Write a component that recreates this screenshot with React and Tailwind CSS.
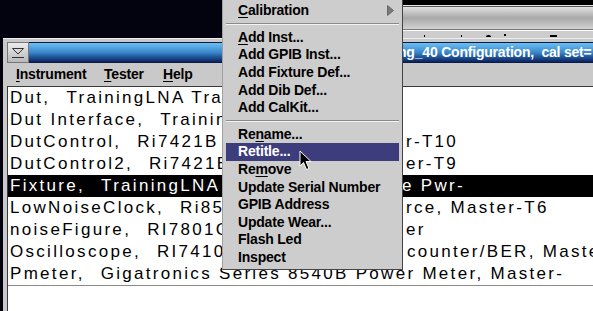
import React from 'react';

// Instrument list rows: left part (clipped under the popup), suffix shown right of the popup
const rows = [
  { a: 'Dut,', b: 'TrainingLNA Training_40 Dut Board', tail: '', ml: 'ml-[7px]' },
  { a: 'Dut Interface,', b: 'TrainingLNA Interface Board', tail: '', ml: 'ml-[7px]' },
  { a: 'DutControl,', b: 'Ri7421B Digital I/O, Maste', tail: 'r-T10', ml: 'ml-[7px]' },
  { a: 'DutControl2,', b: 'Ri7421B Digital I/O, Mast', tail: 'er-T9', ml: 'ml-[7px]' },
  { a: 'Fixture,', b: 'TrainingLNA Fixture, Fixtur', tail: 'e Pwr-', ml: 'ml-[3px]', sel: true },
  { a: 'LowNoiseClock,', b: 'Ri8520 Clock Sou', tail: 'rce, Master-T6', ml: 'ml-[7px]' },
  { a: 'noiseFigure,', b: 'RI7801C Noise Figure Met', tail: 'er', ml: 'ml-[7px]' },
  { a: 'Oscilloscope,', b: 'RI7410 Scope/Time ', tail: 'counter/BER, Master-T4', ml: 'ml-[8px]' },
];

function MenuItem({ children, hi }) {
  return (
    <div className={`flex h-[17.6px] items-center pl-[12px] ${hi ? 'bg-[#3d3d7e] text-white' : 'text-black'}`}>
      {children}
    </div>
  );
}

function Sep() {
  return (
    <div className="flex h-[9px] flex-col justify-center">
      <div className="h-px bg-[#8a8a8a]" />
      <div className="h-px bg-[#f4f4f4]" />
    </div>
  );
}

const U = ({ c }) => <span className="underline decoration-1 underline-offset-2">{c}</span>;

export default function App() {
  return (
    <div className="relative h-[311px] w-[593px] overflow-hidden bg-[#03030f]">
      {/* --- top strip: desktop + window behind --- */}
      <div className="flex h-[38px]">
        <div className="w-[330px] shrink-0" />
        <div className="flex flex-1 flex-col">
          <div className="h-[5px] bg-black" />
          <div className="h-px bg-[#e6e6e6]" />
          <div className="h-px bg-[#555]" />
          <div className="h-[22px] bg-gradient-to-b from-[#e2e2e2] via-[#a8a8a8] to-[#d2d2d2]" />
          <div className="h-px bg-[#777]" />
          <div className="h-px bg-white" />
          <div className="flex flex-1 items-end bg-[#cdcdcd] pb-[1px]">
            <span className="ml-[94px] h-[2px] w-px bg-black" />
            <span className="ml-[36px] h-[2px] w-px bg-black" />
            <span className="ml-[24px] h-[2px] w-[5px] rounded-t bg-black" />
            <span className="ml-[13px] mb-[1px] h-[2px] w-[2px] bg-black" />
            <span className="ml-[44px] h-[2px] w-[7px] bg-black" />
          </div>
        </div>
      </div>

      {/* --- main window --- */}
      <div className="ml-[3px] border-t border-[#eeeeee] bg-[#c9c9c9] pt-[3px]">
        {/* title bar */}
        <div className="flex h-[21px] pl-[4px]">
          <div className="flex w-[22px] shrink-0 items-center justify-center border border-[#777] bg-gradient-to-b from-[#ececec] to-[#b8b8b8]">
            <svg width="14" height="12" viewBox="0 0 14 12">
              <polygon points="1.5,1.5 12.5,1.5 7,7" fill="none" stroke="#333" strokeWidth="1" />
              <line x1="1" y1="10.5" x2="13" y2="10.5" stroke="#333" strokeWidth="1" />
            </svg>
          </div>
          <div className="flex flex-1 items-center overflow-hidden whitespace-nowrap border-y border-[#0a1a44] bg-gradient-to-b from-[#6cc0f0] via-[#3a86cc] to-[#0c2260] font-['Liberation_Sans',sans-serif] text-[14px] font-bold tracking-[-0.2px] text-white">
            <div className="w-[369px] shrink-0 overflow-hidden text-right">Instrument Table, Traini</div>
            <div className="shrink-0">ng_40 Configuration,&nbsp;&nbsp;cal set= default</div>
          </div>
        </div>

        {/* menu bar */}
        <div className="flex h-[22px] items-center pl-[13px] font-['Liberation_Sans',sans-serif] text-[14px] font-bold tracking-[-0.2px] text-black">
          <span className="w-[88px]"><U c="I" />nstrument</span>
          <span className="w-[59px]"><U c="T" />ester</span>
          <span><U c="H" />elp</span>
        </div>

        {/* instrument list */}
        <div className="ml-[4px] mt-[1px] border-l border-t border-[#3a3a3a] bg-white font-['Liberation_Sans',sans-serif] text-[17px] tracking-[2.3px]">
          {rows.map((r) => (
            <div
              key={r.a}
              className={`flex h-[22px] items-center whitespace-nowrap ${r.sel ? 'bg-black text-white' : 'text-black'}`}
            >
              <div className="w-[391px] shrink-0 overflow-hidden pl-[2px]">
                {r.a}
                <span className="inline-block w-[16px]" />
                {r.b}
              </div>
              <div className={`shrink-0 ${r.ml}`}>{r.tail}</div>
            </div>
          ))}
          <div className="flex h-[22px] items-center whitespace-nowrap pl-[2px] text-black">
            Pmeter,
            <span className="inline-block w-[16px]" />
            Gigatronics Series 8540B Power Meter, Master-
          </div>
          <div className="h-[26px] border-t border-[#8a8a8a] bg-white" />
        </div>
      </div>

      {/* --- popup menu --- */}
      <div className="absolute left-[222px] top-0 w-[181px] border-b border-l border-r border-b-[#444] border-l-[#a0a0a0] border-r-[#444] bg-[#cdcdcd] px-[3px] pb-[3px] pt-[2px] font-['Liberation_Sans',sans-serif] text-[14px] font-bold tracking-[-0.2px]">
        <div className="flex h-[17.6px] items-center justify-between pl-[12px] pr-[5px]">
          <span><U c="C" />alibration</span>
          <svg width="7" height="11" viewBox="0 0 7 11">
            <polygon points="0.5,0.5 6.5,5.5 0.5,10.5" fill="#7a7a7a" stroke="#5a5a5a" strokeWidth="0.8" />
          </svg>
        </div>
        <Sep />
        <MenuItem><U c="A" />dd Inst...</MenuItem>
        <MenuItem>Add GPIB Inst...</MenuItem>
        <MenuItem>Add Fixture Def...</MenuItem>
        <MenuItem>Add Dib Def...</MenuItem>
        <MenuItem>Add CalKit...</MenuItem>
        <Sep />
        <MenuItem>Re<U c="n" />ame...</MenuItem>
        <MenuItem hi>Retitle...</MenuItem>
        <MenuItem>Re<U c="m" />ove</MenuItem>
        <MenuItem>Update Serial Number</MenuItem>
        <MenuItem>GPIB Address</MenuItem>
        <MenuItem>Update Wear...</MenuItem>
        <MenuItem>Flash Led</MenuItem>
        <MenuItem>Inspect</MenuItem>
      </div>

      {/* mouse pointer */}
      <svg className="absolute left-[299px] top-[150px]" width="14" height="22" viewBox="0 0 14 22">
        <path d="M1 1 L1 16 L4.5 12.5 L7.5 19.5 L10 18.5 L7 11.5 L12 11.5 Z" fill="black" stroke="white" strokeWidth="1" />
      </svg>
    </div>
  );
}
